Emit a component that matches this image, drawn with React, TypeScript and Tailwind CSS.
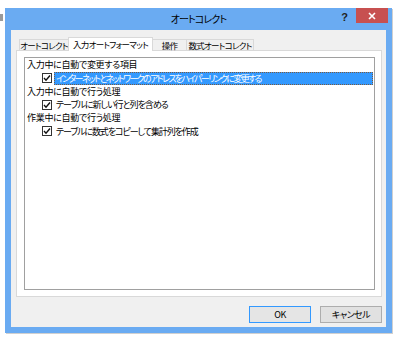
import React from "react";

const jp = "font-['Noto_Sans_CJK_JP',_'Noto_Sans',_sans-serif] [font-feature-settings:'palt']";

function Check() {
  return (
    <span className="w-[10px] h-[10px] border border-[#333] bg-white flex items-center justify-center shrink-0">
      <svg width="8" height="8" viewBox="0 0 8 8">
        <path d="M1 4 L3 6.2 L7 1.5" fill="none" stroke="#111" strokeWidth="1.4" />
      </svg>
    </span>
  );
}

export default function App() {
  return (
    <div className={`w-[400px] h-[343px] bg-white relative overflow-hidden ${jp}`}>
      <div className="absolute left-0 top-[14px] w-[3px] h-[7px] bg-[#9a9a9a]" />
      <div className="pl-[5px] pt-[8px]">
        <div className="w-[387px] h-[325px] bg-[#6aabf2] flex flex-col shadow-[1px_1px_0_#d0d0d0]">
          {/* title bar */}
          <div className="h-[22px] flex items-start relative">
            <div className="flex-1 text-center text-[10px] leading-[22px] text-black tracking-[-0.9px]">オートコレクト</div>
            <div className="absolute right-[44px] top-[3px] text-[11px] font-bold leading-[12px] text-[#222] font-['Liberation_Sans']">?</div>
            <div className="absolute right-[4px] top-0 w-[32px] h-[15px] bg-[#c75050] flex items-center justify-center">
              <svg width="8" height="8" viewBox="0 0 8 8">
                <path d="M1 1 L7 7 M7 1 L1 7" stroke="#fff" strokeWidth="1.6" />
              </svg>
            </div>
          </div>
          {/* client */}
          <div className="mx-[6px] mb-[6px] flex-1 bg-[#f0f0f0] flex flex-col pl-[5px] pr-[4px] pt-[6px]">
            {/* tabs */}
            <div className="flex items-end h-[14px] pl-[3px] text-[8.5px] tracking-[-0.7px] leading-none text-black relative z-10">
              <div className="w-[50px] h-[11px] border border-b-0 border-[#d9d9d9] bg-[#f0f0f0] flex items-center justify-center">オートコレクト</div>
              <div className="w-[85px] h-[14px] border border-b-0 border-[#d9d9d9] bg-white flex items-center justify-center mb-[-1px] ml-[-1px]">入力オートフォーマット</div>
              <div className="w-[34px] h-[11px] border border-b-0 border-l-0 border-[#d9d9d9] bg-[#f0f0f0] flex items-center justify-center">操作</div>
              <div className="w-[67px] h-[11px] border border-b-0 border-l-0 border-[#d9d9d9] bg-[#f0f0f0] flex items-center justify-center">数式オートコレクト</div>
            </div>
            {/* panel */}
            <div className="h-[247px] border border-[#d9d9d9] bg-white pl-[7px] pr-[6px] pt-[6px] pb-[6px] flex">
              <div className="flex-1 border border-[#a0a0a0] bg-white pl-[2px] pr-[1px] text-[9px] tracking-[-0.3px] leading-[13px] text-black flex flex-col">
                <div className="h-[13px]">入力中に自動で変更する項目</div>
                <div className="h-[14px] flex items-center pl-[15px] gap-[2px]">
                  <Check />
                  <div className="flex-1 h-[13px] bg-[#3399ff] text-white border border-dotted border-[#7a5a40] pl-[1px] leading-[11px] tracking-[-1.7px]">インターネットとネットワークのアドレスをハイパーリンクに変更する</div>
                </div>
                <div className="h-[13px]">入力中に自動で行う処理</div>
                <div className="h-[13px] flex items-center pl-[15px] gap-[2px]">
                  <Check />
                  <div className="pl-[2px] tracking-[-1px]">テーブルに新しい行と列を含める</div>
                </div>
                <div className="h-[13px]">作業中に自動で行う処理</div>
                <div className="h-[14px] flex items-center pl-[15px] gap-[2px]">
                  <Check />
                  <div className="pl-[2px] tracking-[-1.1px]">テーブルに数式をコピーして集計列を作成</div>
                </div>
              </div>
            </div>
            {/* buttons */}
            <div className="flex justify-end gap-[9px] mt-[9px] text-[9px] tracking-[-0.5px]">
              <div className="w-[62px] h-[17px] border border-[#3399ff] bg-[#e5e5e5] flex items-center justify-center">OK</div>
              <div className="w-[62px] h-[17px] border border-[#adadad] bg-[#e1e1e1] flex items-center justify-center">キャンセル</div>
            </div>
          </div>
        </div>
      </div>
    </div>
  );
}
